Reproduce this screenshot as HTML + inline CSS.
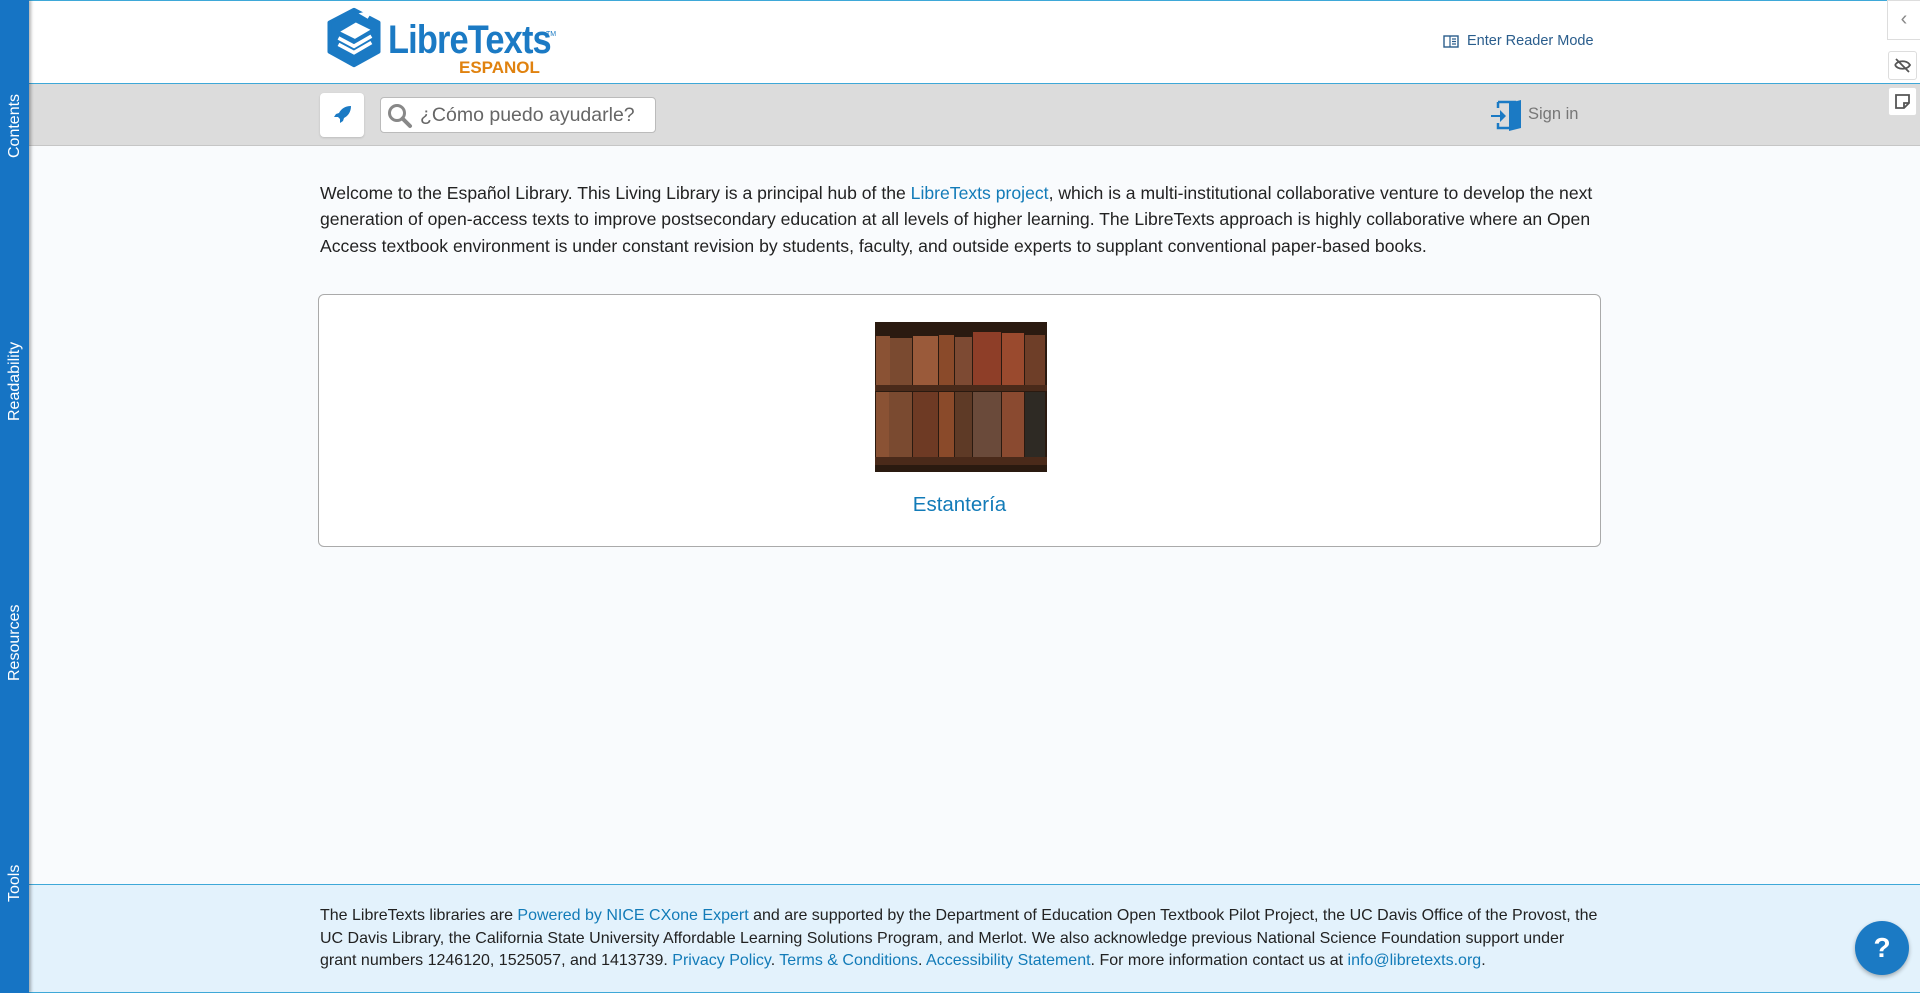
<!DOCTYPE html>
<html><head><meta charset="utf-8"><style>
*{box-sizing:border-box;margin:0;padding:0}
body{width:1920px;height:993px;overflow:hidden;background:#f9fbfd;font-family:"Liberation Sans",sans-serif;position:relative}
a{color:#127bb8;text-decoration:none}
#side{position:absolute;left:0;top:0;width:29px;height:993px;background:#1674c4;box-shadow:2px 0 3px rgba(0,0,0,.3);z-index:5}
.st{position:absolute;color:#fff;font-size:16px;transform:rotate(-90deg);transform-origin:left top;left:6px;white-space:nowrap}
#hdr{position:absolute;left:29px;top:0;width:1891px;height:84px;background:#fff;border-top:1px solid #3ea8d8;border-bottom:1px solid #3ea8d8}
#nav{position:absolute;left:29px;top:84px;width:1891px;height:62px;background:#dcdcdc;border-bottom:1px solid #c6c6c6}
#main{position:absolute;left:320px;top:180px;width:1280px;font-size:17.6px;line-height:26.4px;color:#222}
#card{position:absolute;left:318px;top:294px;width:1283px;height:253px;border:1px solid #aaa;border-radius:6px;background:#fff}
#foot{position:absolute;left:29px;top:884px;width:1891px;height:109px;background:#e3f2fc;border-top:1.5px solid #3ea8d8;border-bottom:1.5px solid #3ea8d8}
#foot p{position:absolute;left:291px;top:20px;font-size:16px;line-height:22.6px;color:#222}
</style></head><body>
<div id="side">
<div class="st" style="top:158px">Contents</div>
<div class="st" style="top:421px">Readability</div>
<div class="st" style="top:681px">Resources</div>
<div class="st" style="top:902px">Tools</div>
</div>
<div id="hdr">
<svg style="position:absolute;left:293px;top:6px" width="64" height="62" viewBox="0 0 70 66"><path d="M35 2 L62 16 L62 48 L35 63 L8 48 L8 16Z" fill="#1b7ac4" stroke="#1b7ac4" stroke-width="4" stroke-linejoin="round"/><path d="M18 40 L35 49 L54 38 M18 33 L35 42 L54 31" stroke="#fff" stroke-width="4" fill="none"/><path d="M20 26 L37 16 L53 24 L36 34Z" fill="#fff"/><path d="M40 6 L56 2 L50 12Z" fill="#fff"/></svg>
<div style="position:absolute;left:359px;top:17px;font-size:40px;font-weight:bold;color:#1b7ac4;letter-spacing:-1px;transform:scaleX(.86);transform-origin:left">LibreTexts</div>
<div style="position:absolute;left:517px;top:30px;font-size:7px;color:#1b7ac4">TM</div>
<div style="position:absolute;left:430px;top:57px;font-size:17px;font-weight:bold;color:#e0820f">ESPANOL</div>
<svg style="position:absolute;left:1414px;top:34px" width="16" height="13" viewBox="0 0 16 13"><rect x="1" y="1" width="14" height="11" fill="none" stroke="#2a5d8c" stroke-width="1.4"/><path d="M7 1v11M9 4h4M9 6.5h4M9 9h4" stroke="#2a5d8c" stroke-width="1.2"/></svg>
<div style="position:absolute;left:1438px;top:32px;font-size:14.5px;color:#2a5d8c">Enter Reader Mode</div>
</div>
<div style="position:absolute;left:1887px;top:0;width:33px;height:40px;background:#fff;border:1px solid #ddd;border-right:none;font-size:20px;color:#888;text-align:center;line-height:36px;z-index:3">‹</div>
<div style="position:absolute;left:1888px;top:51px;width:29px;height:29px;background:#fff;border:1px solid #ddd;border-radius:3px;z-index:3"><svg width="27" height="27" viewBox="0 0 27 27"><path d="M6 13c3-5 12-5 15 0c-3 5-12 5-15 0M7 7l13 13" stroke="#555" stroke-width="1.8" fill="none"/></svg></div>
<div style="position:absolute;left:1888px;top:87px;width:29px;height:29px;background:#fff;border:1px solid #ddd;border-radius:3px;z-index:3"><svg width="27" height="27" viewBox="0 0 27 27"><path d="M7 7h13v8l-5 5h-8z M15 20v-5h5" stroke="#555" stroke-width="1.8" fill="none"/></svg></div>
<div id="nav">
<div style="position:absolute;left:291px;top:9px;width:44px;height:44px;background:#fff;border-radius:4px;box-shadow:0 1px 2px rgba(0,0,0,.15)"><svg style="position:absolute;left:13px;top:12px" width="19" height="19" viewBox="0 0 19 19"><path d="M18 1C12 1 8 4 6 8L3 9L1 12L5 12L7 14L7 18L10 16L11 13C15 11 18 7 18 1Z" fill="#1b7ac4"/></svg></div>
<div style="position:absolute;left:351px;top:13px;width:276px;height:36px;background:#fff;border:1px solid #bbb;border-radius:4px">
<svg style="position:absolute;left:6px;top:5px" width="26" height="26" viewBox="0 0 26 26"><circle cx="10" cy="10" r="7.5" stroke="#888" stroke-width="3" fill="none"/><path d="M15.5 15.5L23 23" stroke="#888" stroke-width="4" stroke-linecap="round"/></svg>
<div style="position:absolute;left:39px;top:6px;font-size:19.5px;color:#666">¿Cómo puedo ayudarle?</div></div>
<svg style="position:absolute;left:1462px;top:15px" width="32" height="33" viewBox="0 0 32 33"><path d="M7 3h17v2M7 3v6M7 24v5h11" stroke="#1b7ac4" stroke-width="2.5" fill="none"/><path d="M18 4L30 1V29L18 32Z" fill="#1b7ac4"/><path d="M0 16h9v-5l6 6l-6 6v-5h-9z" fill="#1b7ac4"/></svg>
<div style="position:absolute;left:1499px;top:21px;font-size:16.5px;color:#777">Sign in</div>
</div>
<div id="main">Welcome to the Español Library. This Living Library is a principal hub of the <a>LibreTexts project</a>, which is a multi-institutional collaborative venture to develop the next<br>generation of open-access texts to improve postsecondary education at all levels of higher learning. The LibreTexts approach is highly collaborative where an Open<br>Access textbook environment is under constant revision by students, faculty, and outside experts to supplant conventional paper-based books.</div>
<div id="card">
<svg style="position:absolute;left:556px;top:27px" width="172" height="150" viewBox="0 0 172 150"><rect width="172" height="150" fill="#2a1a10"/>
<g fill="#8a5234"><rect x="1" y="14" width="14" height="49"/><rect x="15" y="16" width="22" height="47" fill="#7a4a30"/><rect x="38" y="14" width="25" height="49" fill="#9a5a3a"/><rect x="64" y="13" width="15" height="50" fill="#8a4a2a"/><rect x="80" y="15" width="17" height="48" fill="#7d4a33"/><rect x="98" y="10" width="28" height="53" fill="#8e3e28"/><rect x="127" y="11" width="22" height="52" fill="#9a4a2e"/><rect x="150" y="13" width="20" height="50" fill="#6e3e28"/>
<rect x="0" y="63" width="172" height="6" fill="#4a2a1a"/>
<rect x="1" y="70" width="13" height="65" fill="#8a5234"/><rect x="14" y="70" width="23" height="65" fill="#7a4a30"/><rect x="38" y="70" width="25" height="65" fill="#6e3a24"/><rect x="64" y="70" width="15" height="65" fill="#8a4a2a"/><rect x="80" y="70" width="17" height="65" fill="#5e3a26"/><rect x="98" y="70" width="28" height="65" fill="#6a4a3a"/><rect x="127" y="70" width="22" height="65" fill="#8a4a30"/><rect x="150" y="70" width="20" height="65" fill="#2e2a24"/>
<rect x="0" y="135" width="172" height="8" fill="#4a2a1a"/></g></svg>
<div style="position:absolute;left:0;width:100%;text-align:center;top:198px;font-size:20.5px;color:#127bb8">Estantería</div>
</div>
<div id="foot"><p>The LibreTexts libraries are <a>Powered by NICE CXone Expert</a> and are supported by the Department of Education Open Textbook Pilot Project, the UC Davis Office of the Provost, the<br>UC Davis Library, the California State University Affordable Learning Solutions Program, and Merlot. We also acknowledge previous National Science Foundation support under<br>grant numbers 1246120, 1525057, and 1413739. <a>Privacy Policy</a>. <a>Terms &amp; Conditions</a>. <a>Accessibility Statement</a>. For more information contact us at <a>info@libretexts.org</a>.</p></div>
<div style="position:absolute;left:1855px;top:921px;width:54px;height:54px;border-radius:50%;background:#1b7ac4;color:#fff;font-size:28px;font-weight:bold;text-align:center;line-height:54px;box-shadow:0 2px 4px rgba(0,0,0,.3)">?</div>
</body></html>
